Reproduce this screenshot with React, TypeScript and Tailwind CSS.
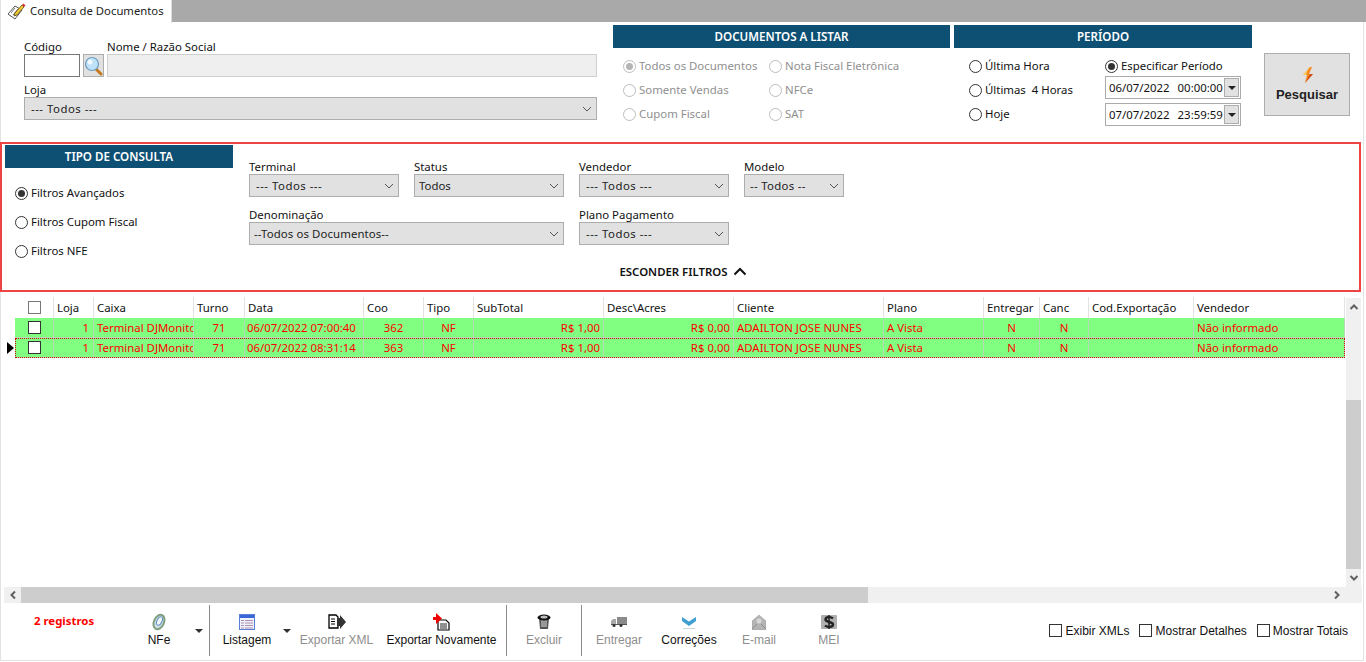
import React from "react";

function Radio({ label, checked, disabled }: { label: string; checked?: boolean; disabled?: boolean }) {
  return (
    <div className={`flex items-center h-[16px] whitespace-pre gap-[3px] ${disabled ? "text-[#8f8f8f]" : "text-[#111]"}`}>
      <span className={`w-[13px] h-[13px] rounded-full border flex items-center justify-center shrink-0 ${disabled ? "border-[#bdbdbd]" : "border-[#333]"}`}>
        {checked && <span className={`w-[7px] h-[7px] rounded-full ${disabled ? "bg-[#b5b5b5]" : "bg-[#333]"}`} />}
      </span>
      <span>{label}</span>
    </div>
  );
}

function Chevron() {
  return (
    <svg width="10" height="6" viewBox="0 0 10 6" className="shrink-0">
      <path d="M1 1l4 4 4-4" fill="none" stroke="#555" strokeWidth="1" />
    </svg>
  );
}

function Select({ label, value, w, pad = "pl-[5px]", track = "" }: { label: string; value: string; w: string; pad?: string; track?: string }) {
  return (
    <div className={`flex flex-col ${w}`}>
      <span className="h-[15px] leading-[15px] text-[#111]">{label}</span>
      <div className={`h-[23px] bg-[#e1e1e1] border border-[#adadad] flex items-center justify-between pr-[4px] text-[#222] ${pad}`}>
        <span className={track}>{value}</span>
        <Chevron />
      </div>
    </div>
  );
}

function Banner({ children }: { children: React.ReactNode }) {
  return (
    <div className="h-[23px] bg-[#0e5074] text-white flex items-center justify-center font-semibold text-[11.6px]">
      {children}
    </div>
  );
}

function DateBox({ d, t }: { d: string; t: string }) {
  return (
    <div className="w-[136px] h-[23px] border border-[#ababab] flex items-center pl-[3px] pr-[1px] text-[#111] bg-white">
      <span className="flex gap-[8px]"><span>{d}</span><span>{t}</span></span>
      <span className="w-[15px] h-[19px] ml-auto bg-[#e1e1e1] border border-[#adadad] flex items-center justify-center">
        <span className="w-0 h-0 border-l-[4px] border-r-[4px] border-t-[4px] border-l-transparent border-r-transparent border-t-[#222]" />
      </span>
    </div>
  );
}

const cols: { t: string; w: number; a?: string }[] = [
  { t: "", w: 39 },
  { t: "Loja", w: 40, a: "text-right pr-[4px]" },
  { t: "Caixa", w: 100, a: "pl-[3px]" },
  { t: "Turno", w: 51, a: "text-center" },
  { t: "Data", w: 119, a: "pl-[2px]" },
  { t: "Coo", w: 60, a: "text-center" },
  { t: "Tipo", w: 50, a: "text-center" },
  { t: "SubTotal", w: 130, a: "text-right pr-[3px]" },
  { t: "Desc\\Acres", w: 130, a: "text-right pr-[3px]" },
  { t: "Cliente", w: 150, a: "pl-[3px]" },
  { t: "Plano", w: 100, a: "pl-[3px]" },
  { t: "Entregar", w: 56, a: "text-center" },
  { t: "Canc", w: 49, a: "text-center" },
  { t: "Cod.Exportação", w: 105, a: "pl-[3px]" },
  { t: "Vendedor", w: 151, a: "pl-[3px]" },
];

const rows = [
  ["1", "Terminal DJMonitor", "71", "06/07/2022 07:00:40", "362", "NF", "R$ 1,00", "R$ 0,00", "ADAILTON JOSE NUNES", "A Vista", "N", "N", "", "Não informado"],
  ["1", "Terminal DJMonitor", "71", "06/07/2022 08:31:14", "363", "NF", "R$ 1,00", "R$ 0,00", "ADAILTON JOSE NUNES", "A Vista", "N", "N", "", "Não informado"],
];

function Row({ cells, sel }: { cells: string[]; sel?: boolean }) {
  return (
    <div className="flex h-[20px]">
      <div className="w-[15px] shrink-0 flex items-center justify-end pr-[1px]">
        {sel && <span className="w-0 h-0 border-t-[6px] border-b-[6px] border-l-[7px] border-t-transparent border-b-transparent border-l-black" />}
      </div>
      <div className={`flex bg-[#80ff80] text-[#ff0000] ${sel ? "outline-1 outline-dotted outline-[#d00000] -outline-offset-1" : ""}`}>
        <div className="w-[39px] shrink-0 border-r border-b border-[#b4dcb4] flex items-center justify-center">
          <span className="w-[13px] h-[13px] border border-[#333] bg-white" />
        </div>
        {cells.map((c, i) => (
          <div
            key={i}
            style={{ width: cols[i + 1].w }}
            className={`shrink-0 overflow-hidden whitespace-nowrap border-r border-b border-[#b4dcb4] leading-[20px] ${cols[i + 1].a ?? ""}`}
          >
            {c}
          </div>
        ))}
      </div>
    </div>
  );
}

function ToolBtn({ label, w, disabled, children }: { label: string; w: string; disabled?: boolean; children: React.ReactNode }) {
  return (
    <div className={`${w} flex flex-col items-center shrink-0 pt-[9px] ${disabled ? "text-[#8e8e8e]" : "text-[#111]"}`}>
      <div className="h-[20px] flex items-center justify-center">{children}</div>
      <span className="whitespace-nowrap leading-[16px]">{label}</span>
    </div>
  );
}

const Sep = () => <div className="w-px h-[51px] bg-[#8a8a8a] shrink-0 mt-[2px]" />;
const Caret = ({ w }: { w: string }) => (
  <div className={`${w} shrink-0 flex justify-center pt-[26px]`}>
    <span className="w-0 h-0 border-l-[4px] border-r-[4px] border-t-[4px] border-l-transparent border-r-transparent border-t-[#333]" />
  </div>
);

function Check({ label }: { label: string }) {
  return (
    <div className="flex items-center gap-[3px] whitespace-nowrap text-[#111]">
      <span className="w-[13px] h-[13px] border border-[#333]" />
      <span>{label}</span>
    </div>
  );
}

const Arrow = ({ d }: { d: string }) => (
  <svg width="10" height="10" viewBox="0 0 10 10"><path d={d} fill="none" stroke="#606060" strokeWidth="2" /></svg>
);

export default function App() {
  return (
    <div className="w-[1366px] h-[662px] bg-white overflow-hidden text-[11.4px] font-['Noto_Sans','Open_Sans',sans-serif]">
      <div className="w-[1364px] h-[661px] flex flex-col shadow-[inset_1px_0_0_#e3e3e3,inset_-1px_-1px_0_#e3e3e3]">
        {/* Tab strip */}
        <div className="h-[23px] w-[1366px] flex shrink-0">
          <div className="w-[172px] h-[23px] flex items-center pl-[7px] text-[#222] shrink-0 gap-[3px] border-r border-[#dcdcdc]">
            <svg width="20" height="18" viewBox="0 0 20 18">
              <path d="M1 11L8 3l7 4-7 9z" fill="#fff" stroke="#555" strokeWidth="1" />
              <path d="M4 10l4-5M6 12l5-6M8 13l4-5" stroke="#777" strokeWidth="1" />
              <path d="M8 10l7-8 2 2-7 8-3 1z" fill="#f0cc30" stroke="#5a4810" strokeWidth="0.800" />
              <path d="M15 2l1.500-1.500 2 2L17 4z" fill="#d03030" />
            </svg>
            <span className="text-[11.3px]">Consulta de Documentos</span>
          </div>
          <div className="flex-1 h-[22px] bg-[#a9a9a9]" />
        </div>

        {/* Top section */}
        <div className="h-[119px] flex shrink-0">
          <div className="w-[573px] ml-[24px] mt-[16px] shrink-0">
            <div className="flex">
              <div className="w-[83px] h-[15px] leading-[15px] text-[#111]">Código</div>
              <div className="h-[15px] leading-[15px] text-[#111]">Nome / Razão Social</div>
            </div>
            <div className="flex h-[24px]">
              <div className="w-[56px] h-[23px] border border-[#777] bg-white" />
              <div className="w-[21px] h-[23px] ml-[3px] bg-[#e1e1e1] border border-[#adadad] flex items-center justify-center">
                <svg width="19" height="20" viewBox="0 0 19 20">
                  <path d="M12 13l5 5" stroke="#c47a20" strokeWidth="3" strokeLinecap="round" />
                  <circle cx="8" cy="8" r="6.500" fill="#bfe2f8" stroke="#6a9cc0" strokeWidth="1.200" />
                  <circle cx="6" cy="6" r="2.500" fill="#fff" opacity="0.800" />
                </svg>
              </div>
              <div className="w-[490px] ml-[3px] h-[23px] bg-[#efefef] border border-[#cfcfcf]" />
            </div>
            <div className="h-[15px] leading-[15px] mt-[4px] text-[#111]">Loja</div>
            <div className="h-[23px] bg-[#e1e1e1] border border-[#adadad] flex items-center justify-between pl-[6px] pr-[4px] text-[#222]">
              <span className="tracking-[0.5px]">--- Todos ---</span>
              <Chevron />
            </div>
          </div>

          <div className="w-[337px] ml-[16px] mt-[2px] shrink-0">
            <Banner>DOCUMENTOS A LISTAR</Banner>
            <div className="flex mt-[10px] ml-[10px]">
              <div className="w-[146px] flex flex-col gap-[8px]">
                <Radio disabled checked label="Todos os Documentos" />
                <Radio disabled label="Somente Vendas" />
                <Radio disabled label="Cupom Fiscal" />
              </div>
              <div className="flex flex-col gap-[8px]">
                <Radio disabled label="Nota Fiscal Eletrônica" />
                <Radio disabled label="NFCe" />
                <Radio disabled label="SAT" />
              </div>
            </div>
          </div>

          <div className="w-[298px] ml-[4px] mt-[2px] shrink-0">
            <Banner>PERÍODO</Banner>
            <div className="flex mt-[10px] ml-[15px]">
              <div className="w-[136px] flex flex-col gap-[8px]">
                <Radio label="Última Hora" />
                <Radio label="Últimas  4 Horas" />
                <Radio label="Hoje" />
              </div>
              <div className="flex flex-col">
                <Radio checked label="Especificar Período" />
                <div className="mt-[2px]"><DateBox d="06/07/2022" t="00:00:00" /></div>
                <div className="mt-[4px]"><DateBox d="07/07/2022" t="23:59:59" /></div>
              </div>
            </div>
          </div>

          <div className="w-[86px] h-[63px] ml-[12px] mt-[30px] bg-[#e1e1e1] border border-[#adadad] flex flex-col items-center justify-center shrink-0">
            <svg width="12" height="16" viewBox="0 0 12 16" className="mt-[2px] ml-[2px]">
              <path d="M8 0L1 8h4l-2 8 8-9H7l3-7z" fill="#f58a20" />
              <path d="M8 0L1 8h3l3-8z" fill="#fbd060" />
              <path d="M3 16l8-9H8z" fill="#d04a18" />
            </svg>
            <span className="mt-[2px] font-['Liberation_Sans',sans-serif] font-bold text-[#222] text-[13px]">Pesquisar</span>
          </div>
        </div>

        {/* Filter box */}
        <div className="h-[150px] w-[1361px] mb-[5px] border-2 border-[#ee4444] flex shrink-0">
          <div className="w-[228px] ml-[3px] mt-[1px] shrink-0">
            <Banner>TIPO DE CONSULTA</Banner>
            <div className="ml-[10px] mt-[17px] flex flex-col gap-[13px]">
              <Radio checked label="Filtros Avançados" />
              <Radio label="Filtros Cupom Fiscal" />
              <Radio label="Filtros NFE" />
            </div>
          </div>
          <div className="ml-[16px] mt-[15px] flex flex-col flex-1">
            <div className="flex gap-[15px]">
              <Select label="Terminal" value="--- Todos ---" w="w-[150px]" pad="pl-[6px]" track="tracking-[0.5px]" />
              <Select label="Status" value="Todos" w="w-[150px]" pad="pl-[4px]" />
              <Select label="Vendedor" value="--- Todos ---" w="w-[150px]" pad="pl-[6px]" track="tracking-[0.5px]" />
              <Select label="Modelo" value="-- Todos --" w="w-[100px]" pad="pl-[5px]" track="tracking-[0.3px]" />
            </div>
            <div className="flex gap-[15px] mt-[10px]">
              <Select label="Denominação" value="--Todos os Documentos--" w="w-[315px]" pad="pl-[4px]" track="tracking-[0.1px]" />
              <Select label="Plano Pagamento" value="--- Todos ---" w="w-[150px]" pad="pl-[6px]" track="tracking-[0.5px]" />
            </div>
            <div className="flex items-center justify-center w-[868px] mt-[18px] font-semibold text-[#111] gap-[5px]">
              <span>ESCONDER FILTROS</span>
              <svg width="14" height="9" viewBox="0 0 14 9"><path d="M1.500 7.500L7 2l5.500 5.500" fill="none" stroke="#111" strokeWidth="2" /></svg>
            </div>
          </div>
        </div>

        {/* Grid */}
        <div className="h-[290px] flex shrink-0">
          <div className="w-[1345px] shrink-0">
            <div className="flex h-[21px]">
              <div className="w-[15px] shrink-0" />
              {cols.map((c, i) => (
                <div
                  key={i}
                  style={{ width: c.w }}
                  className={`shrink-0 border-r border-[#e2e2e2] leading-[22px] text-[#111] whitespace-nowrap flex items-center ${i === 0 ? "justify-center" : "pl-[3px]"}`}
                >
                  {i === 0 ? <span className="w-[13px] h-[13px] border border-[#777]" /> : c.t}
                </div>
              ))}
            </div>
            <Row cells={rows[0]} />
            <Row cells={rows[1]} sel />
          </div>
          <div className="w-[15px] ml-[1px] mt-[1px] bg-[#f0f0f0] flex flex-col shrink-0">
            <div className="h-[17px] flex items-center justify-center"><Arrow d="M1.500 7L5 3.500 8.500 7" /></div>
            <div className="h-[85px]" />
            <div className="h-[169px] bg-[#cdcdcd]" />
            <div className="h-[17px] flex items-center justify-center"><Arrow d="M1.500 3L5 6.500 8.500 3" /></div>
          </div>
        </div>

        {/* Horizontal scrollbar */}
        <div className="h-[16px] w-[1358px] ml-[4px] bg-[#f0f0f0] flex shrink-0">
          <div className="w-[17px] flex items-center justify-center"><Arrow d="M7 1.500L3.500 5 7 8.500" /></div>
          <div className="w-[847px] bg-[#cdcdcd]" />
          <div className="flex-1 flex items-center justify-end pr-[20px]"><Arrow d="M3 1.500L6.500 5 3 8.500" /></div>
        </div>

        {/* Toolbar */}
        <div className="flex flex-1 font-['Liberation_Sans',sans-serif] text-[12px] relative">
          <div className="w-[129px] shrink-0 pl-[34px] pt-[9px] text-[#ff0000] font-bold font-['Noto_Sans',sans-serif] text-[11.4px] whitespace-nowrap">2 registros</div>
          <ToolBtn label="NFe" w="w-[60px]">
            <svg width="16" height="18" viewBox="0 0 16 18">
              <ellipse cx="8" cy="9" rx="5" ry="7.500" transform="rotate(25 8 9)" fill="#cfe0e8" stroke="#7f9f7f" strokeWidth="2" />
              <ellipse cx="8.500" cy="8" rx="2.500" ry="4.500" transform="rotate(25 8.500 8)" fill="#f2f6f8" stroke="#5f8fc0" strokeWidth="1" />
            </svg>
          </ToolBtn>
          <Caret w="w-[20px]" />
          <Sep />
          <ToolBtn label="Listagem" w="w-[74px]">
            <svg width="16" height="16" viewBox="0 0 16 16">
              <rect x="0.500" y="0.500" width="15" height="15" fill="#eef2fb" stroke="#5a7fd8" />
              <rect x="1" y="1" width="14" height="3" fill="#3a66d8" />
              <path d="M2 6.500h3M6 6.500h8M2 9h3M6 9h8M2 11.500h3M6 11.500h8M2 14h3M6 14h8" stroke="#b090b0" strokeWidth="1.200" />
            </svg>
          </ToolBtn>
          <Caret w="w-[6px]" />
          <div className="w-[11px] shrink-0" />
          <ToolBtn label="Exportar XML" w="w-[71px]" disabled>
            <svg width="18" height="16" viewBox="0 0 18 16">
              <path d="M1 1h7l2 2v11H1z" fill="#fff" stroke="#000" strokeWidth="1.300" />
              <path d="M3 5h4M3 7.500h4M3 10h4" stroke="#000" />
              <path d="M9 4h3V1l6 7-6 7v-3H9z" fill="#333" />
            </svg>
          </ToolBtn>
          <div className="w-[14px] shrink-0" />
          <ToolBtn label="Exportar Novamente" w="w-[111px]">
            <svg width="18" height="18" viewBox="0 0 18 18">
              <path d="M5 7h8l3 3v7H5z" fill="#fff" stroke="#000" strokeWidth="1.200" />
              <path d="M7 11h7M7 13h7M7 15h7" stroke="#222" />
              <path d="M0 4h3V0l6 5.500L3 11V7H0z" fill="#f00000" />
            </svg>
          </ToolBtn>
          <div className="w-[9px] shrink-0" />
          <Sep />
          <ToolBtn label="Excluir" w="w-[74px]" disabled>
            <svg width="14" height="16" viewBox="0 0 14 16">
              <path d="M2 4l1 11h8l1-11z" fill="#555" />
              <path d="M5 6v7M7 6v7M9 6v7" stroke="#ddd" />
              <ellipse cx="7" cy="3.500" rx="6.500" ry="3" fill="#111" />
              <ellipse cx="7" cy="3" rx="3.500" ry="1.500" fill="#bbb" />
            </svg>
          </ToolBtn>
          <Sep />
          <div className="w-[13px] shrink-0" />
          <ToolBtn label="Entregar" w="w-[48px]" disabled>
            <svg width="16" height="10" viewBox="0 0 16 10">
              <rect x="6" y="0" width="10" height="7" fill="#8a8a8a" />
              <path d="M0 4l2-2h3v5H0z" fill="#a8a8a8" />
              <rect x="0" y="7" width="16" height="1" fill="#555" />
              <circle cx="3" cy="8.500" r="1.500" fill="#333" />
              <circle cx="10" cy="8.500" r="1.500" fill="#333" />
            </svg>
          </ToolBtn>
          <div className="w-[17px] shrink-0" />
          <ToolBtn label="Correções" w="w-[58px]">
            <svg width="14" height="14" viewBox="0 0 14 14">
              <path d="M0 2l7 4.500L14 2v4l-7 5-7-5z" fill="#3f9fd0" />
              <rect x="1" y="13" width="12" height="1" fill="#c8d8e0" />
            </svg>
          </ToolBtn>
          <div className="w-[12px] shrink-0" />
          <ToolBtn label="E-mail" w="w-[58px]" disabled>
            <svg width="14" height="15" viewBox="0 0 14 15">
              <path d="M0 6l7-6 7 6v9H0z" fill="#b4b4b4" stroke="#9a9a9a" strokeWidth="0.500" />
              <circle cx="7" cy="6" r="2.500" fill="#d8d8d8" />
              <path d="M0 14l5-5M14 14l-5-5" stroke="#8f8f8f" />
            </svg>
          </ToolBtn>
          <div className="w-[12px] shrink-0" />
          <ToolBtn label="MEI" w="w-[58px]" disabled>
            <svg width="16" height="16" viewBox="0 0 16 16">
              <rect x="0" y="1" width="16" height="14" rx="1" fill="#b0b0b0" />
              <path d="M12 4.500C10 2.500 4.500 2.500 4.500 5.500S12 7.500 12 10.500 6 13.500 4 11.500" fill="none" stroke="#222" strokeWidth="2.400" />
              <path d="M8 1v14" stroke="#222" strokeWidth="1.500" />
            </svg>
          </ToolBtn>
          <div className="flex-1" />
          <div className="flex gap-[10px] pt-[19px] pr-[16px] h-[36px] items-center shrink-0">
            <Check label="Exibir XMLs" />
            <Check label="Mostrar Detalhes" />
            <Check label="Mostrar Totais" />
          </div>
        </div>
      </div>
    </div>
  );
}
